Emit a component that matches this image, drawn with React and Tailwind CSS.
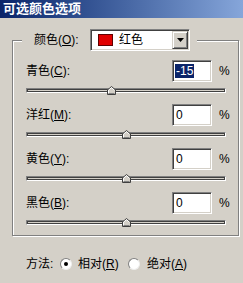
const rows = [
  { label: "青色", hotkey: "C", value: -15, selected: true },
  { label: "洋红", hotkey: "M", value: 0 },
  { label: "黄色", hotkey: "Y", value: 0 },
  { label: "黑色", hotkey: "B", value: 0 },
];

const sunken =
  "border border-t-[#808080] border-l-[#808080] border-b-white border-r-white shadow-[inset_1px_1px_0_#404040,inset_-1px_-1px_0_#d4d0c8]";

function Hot({ text, hotkey, colon = true }) {
  return (
    <span className="whitespace-nowrap">
      {text}(<span className="underline underline-offset-[1px]">{hotkey}</span>){colon ? ":" : ""}
    </span>
  );
}

function Slider({ value }) {
  // track is 200px wide, value runs -100..100
  const left = 100 + value - 4;
  return (
    <div className="relative h-[9px] w-[200px] pt-[2px]">
      <div className="h-[5px] w-full border border-t-[#808080] border-l-[#808080] border-b-white border-r-white shadow-[inset_1px_1px_0_#404040,inset_-1px_-1px_0_#404040] bg-[#d4d0c8]" />
      <svg className="absolute top-0" style={{ left }} width="9" height="9" viewBox="0 0 9 9">
        <polygon points="0.5,4 4.5,0.5 8.5,4 8.5,8.5 0.5,8.5" fill="#d4d0c8" stroke="#404040" />
        <polyline points="1.5,7.5 1.5,4.3 4.5,1.6 7.3,4.2" fill="none" stroke="#ffffff" />
        <line x1="1.5" y1="7.5" x2="7.5" y2="7.5" stroke="#808080" />
      </svg>
    </div>
  );
}

function Radio({ checked }) {
  return (
    <span className="relative flex h-[12px] w-[12px] items-center justify-center rounded-full bg-white border border-t-[#808080] border-l-[#808080] border-b-[#eeeeee] border-r-[#eeeeee]">
      {checked && <span className="h-[4px] w-[4px] rounded-full bg-black" />}
    </span>
  );
}

export default function App() {
  return (
    <div
      className="h-[283px] w-[243px] overflow-hidden bg-[#d4d0c8] text-[12px] leading-[14px] text-black"
      style={{ fontFamily: '"Liberation Sans", "Noto Sans CJK SC", sans-serif' }}
    >
      {/* title bar */}
      <div className="flex h-[18px] items-center bg-gradient-to-r from-[#0a246a] to-[#86a6da] pl-[3px] text-[13px] font-bold text-white">
        可选颜色选项
      </div>

      {/* group box */}
      <div className="relative ml-[12px] mt-[22px] h-[196px] w-[227px] border border-[#808080] shadow-[1px_1px_0_#fff,inset_1px_1px_0_#fff]">
        <div className="absolute left-[9px] top-[-12px] flex h-[22px] items-center bg-[#d4d0c8] pl-[12px] pr-[7px]">
          <span className="w-[56px]">
            <Hot text="颜色" hotkey="O" />
          </span>
          <div className={`flex h-[22px] w-[100px] items-center bg-white ${sunken}`}>
            <span className="ml-[7px] h-[12px] w-[15px] border border-[#600000] bg-[#e00000]" />
            <span className="ml-[6px] flex-1">红色</span>
            <span className="mr-[1px] flex h-[18px] w-[16px] items-center justify-center border border-t-[#d4d0c8] border-l-[#d4d0c8] border-b-[#404040] border-r-[#404040] bg-[#d4d0c8] shadow-[inset_1px_1px_0_#fff,inset_-1px_-1px_0_#808080]">
              <svg width="7" height="4" viewBox="0 0 7 4">
                <polygon points="0,0 7,0 3.5,4" fill="#000" />
              </svg>
            </span>
          </div>
        </div>

        <div className="flex flex-col gap-[9px] pl-[13px] pt-[19px]">
          {rows.map((r) => (
            <div key={r.hotkey} className="flex flex-col gap-[4px]">
              <div className="flex h-[22px] items-center">
                <span className="w-[146px]">
                  <Hot text={r.label} hotkey={r.hotkey} />
                </span>
                <div className={`flex h-[22px] w-[40px] items-center bg-white pl-[2px] ${sunken}`}>
                  <span
                    className={
                      r.selected ? "bg-[#0a246a] px-[1px] text-white" : "px-[1px]"
                    }
                  >
                    {r.value}
                  </span>
                </div>
                <span className="ml-[7px]">%</span>
              </div>
              <Slider value={r.value} />
            </div>
          ))}
        </div>
      </div>

      {/* method */}
      <div className="mt-[21px] flex h-[14px] items-center pl-[26px]">
        <span className="w-[34px]">方法:</span>
        <Radio checked />
        <span className="ml-[6px] w-[50px]">
          <Hot text="相对" hotkey="R" colon={false} />
        </span>
        <Radio />
        <span className="ml-[7px]">
          <Hot text="绝对" hotkey="A" colon={false} />
        </span>
      </div>
    </div>
  );
}
